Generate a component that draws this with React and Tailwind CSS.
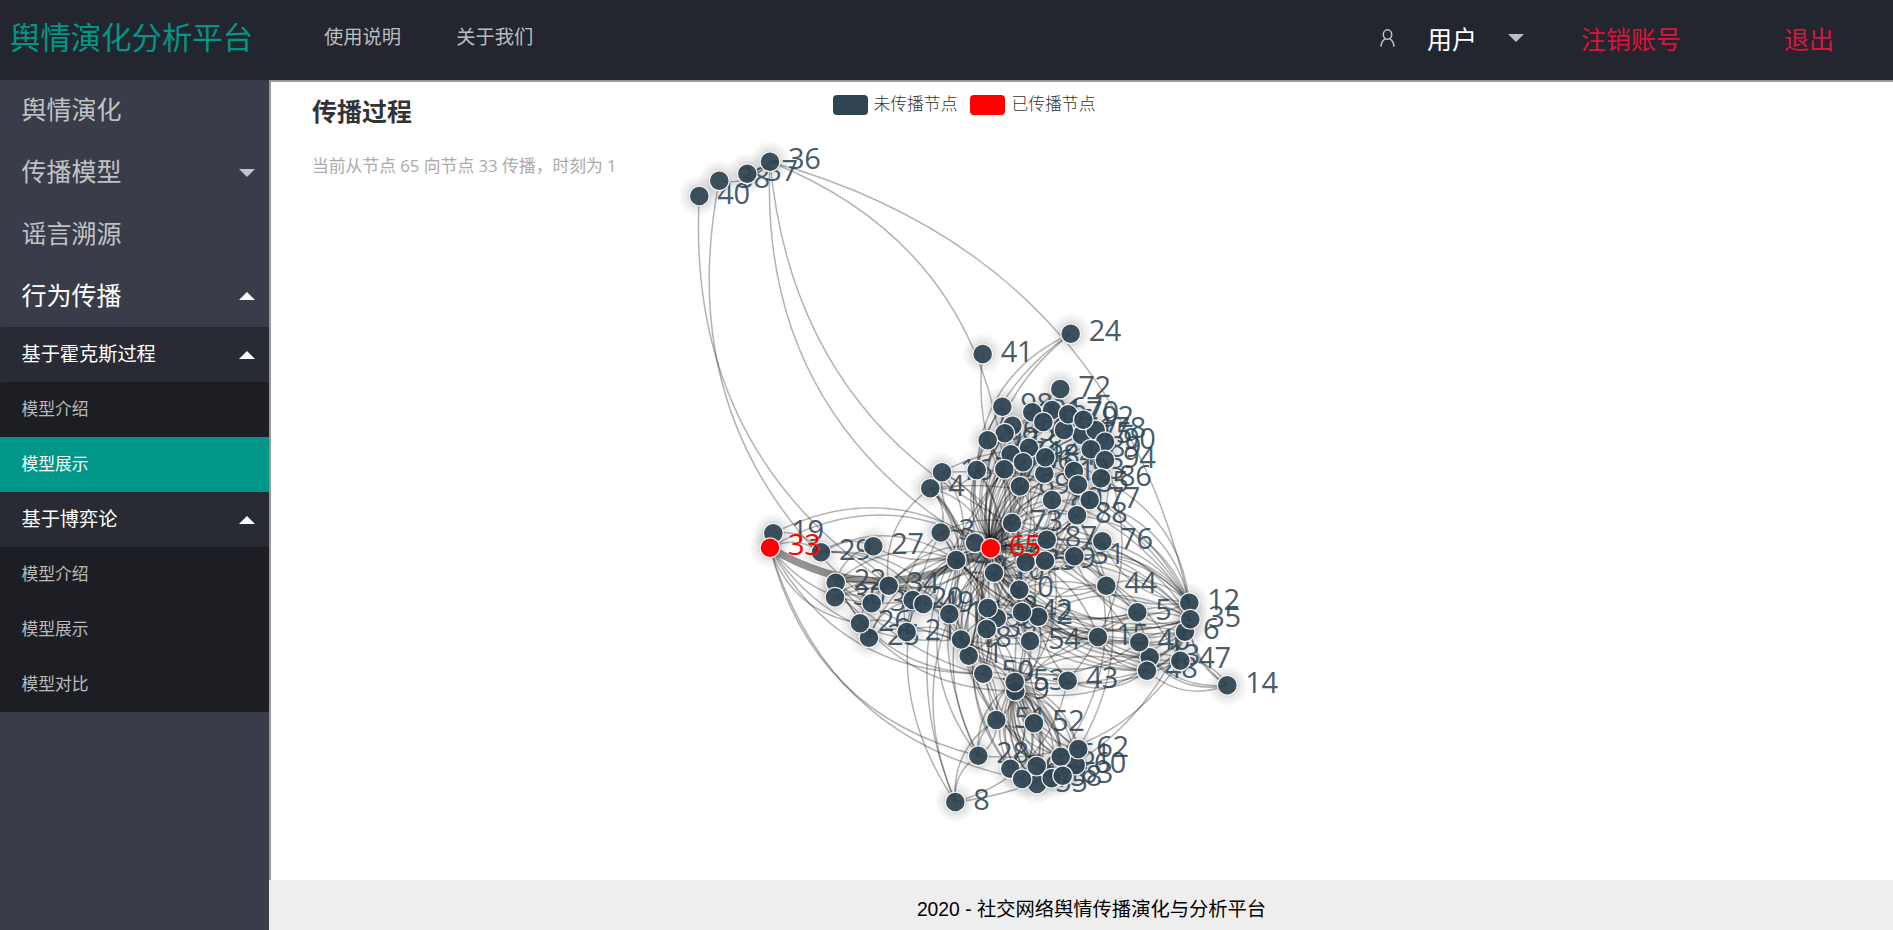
import React from "react";

const FONT = "font-['Open_Sans','Noto_Sans_CJK_SC',sans-serif]";

// [id, x, y], listed in painting order
const NODES = [
  ["36", 770, 161.7], ["37", 747.3, 173.7], ["38", 719.3, 180.7], ["40", 699.3, 196],
  ["41", 982.7, 354], ["24", 1070.7, 333.7],
  ["52", 1034, 723.3],
  ["72", 1060.3, 389], ["98", 1002.3, 406.7], ["91", 1032.3, 412.3], ["67", 1052, 410],
  ["97", 1012.3, 425.7], ["75", 1081.7, 435], ["78", 1095.7, 430], ["90", 1105, 441.7],
  ["96", 1043.3, 422], ["71", 1064, 430], ["70", 1068.3, 414.3], ["92", 1083.3, 419.7],
  ["95", 1004.7, 433.3], ["99a", 987.7, 440.3], ["89", 1090.7, 449.3], ["94", 1105, 460],
  ["82", 1029, 447.7], ["74", 1010.7, 454.3], ["79", 1004.3, 469.3], ["66", 1023, 462.3],
  ["81", 1044.3, 473.7], ["84", 1045.3, 457.3], ["7", 976.7, 470], ["93", 1074, 471],
  ["86", 1101, 478.3], ["85", 1078, 484.7], ["69", 1020, 486.3], ["77", 1089.7, 500],
  ["80", 1052, 500], ["88", 1077, 515.3], ["73", 1012, 523],
  ["16", 942, 472.3], ["4", 930.3, 488.3],
  ["76", 1102.3, 541.3], ["87", 1046.7, 539.7], ["3", 940.7, 532.5], ["11", 975, 542.7],
  ["19", 773.3, 533.3], ["29", 821, 552.3], ["33", 770, 547.7], ["27", 873.3, 546.3],
  ["45", 956.3, 560], ["10", 994, 572.7], ["65", 990.7, 548.3],
  ["23", 1025.7, 562.3], ["59", 1045, 560.7], ["31", 1074.3, 556.3],
  ["22", 835.7, 582.7], ["30", 835, 597.3], ["34", 888.7, 585.7], ["20", 912.7, 600],
  ["32", 871.7, 603.3], ["49", 923.3, 604], ["17", 949.3, 614], ["25", 869, 637.7],
  ["26", 860, 623.3], ["21", 906.7, 632], ["1", 968.7, 655.7], ["18", 961, 639.5],
  ["0", 1019.3, 589.7], ["44", 1106.3, 585.7], ["5", 1137.3, 612.3],
  ["2", 1038.3, 616.7], ["42", 1022, 612], ["99", 996.7, 618], ["32b", 987.7, 608],
  ["39", 986.7, 629], ["54", 1030, 641], ["15", 1098, 637],
  ["50", 983.3, 673.7], ["9", 1015.3, 691], ["53", 1014.7, 682], ["43", 1067.7, 680.7],
  ["13", 1149.7, 657.3], ["46", 1139.3, 642.3], ["48", 1147, 670.7],
  ["6", 1185, 631.7], ["12", 1189.3, 602.7], ["35", 1190.3, 619.3], ["47", 1180.3, 660.7],
  ["14", 1227.3, 685.3],
  ["51", 996.3, 720], ["28", 978.3, 755.7], ["8", 955.3, 802],
  ["55", 1037, 784], ["56", 1010.3, 768.7], ["57", 1022, 779], ["64", 1036.7, 766],
  ["60", 1075.7, 765], ["58", 1051.7, 778.3], ["61", 1060.7, 756.7], ["63", 1062.7, 775.7],
  ["62", 1078.3, 749],
];

// source node -> target nodes
const LINKS = {
  "20": "40 33 65 1",
  "32": "38 45",
  "11": "36 24 16 27",
  "87": "36 65 12 35 9 59",
  "36": "79 12 37 38",
  "65":
    "24 72 98 91 67 97 96 71 70 75 78 90 92 95 99a 89 94 82 74 79 66 84 7 81 93 86 85 69 77 80 88 73 76 87 44 12 35 5 48 53 9 34 0 10 59 31 23 15 47",
  "98": "65 99a 7",
  "99a": "65 10",
  "97": "65 39",
  "74": "65 69 84",
  "66": "65 81 10",
  "84": "65 11 23",
  "69": "65 80 23",
  "73": "65 88 31",
  "80": "65 87 10 42",
  "88": "65 12 62 61",
  "77": "65 12 45",
  "86": "65 35",
  "94": "77 31 43",
  "93": "10 0 84",
  "85": "65 23",
  "7": "65 24 12 39 4",
  "16": "65 12 45 86 42",
  "4": "65 3 45 18 12 17 1",
  "3": "65 45 17 87 23",
  "8": "65 3 79 28 51",
  "28": "65 33 45 53 51 79",
  "50": "33 53 22",
  "57": "33 53 9",
  "55": "53 9",
  "58": "53 9 65",
  "56": "53 10 32b",
  "64": "53 65 9",
  "53": "56 57 55 64 58 63 61 62 60 52 51 43 48",
  "9": "61 62 63 57 56 64 6 22",
  "63": "53 45",
  "61": "42 52 53 18",
  "62": "9 65 54",
  "47": "28 65 15 6 14 18",
  "35": "8 10 65 45 48 46 13 5 42",
  "6": "18 65 46 48 13 9 10",
  "12": "10 76 87",
  "14": "48 46 35 13 12",
  "48": "65 10 45 22 15 43",
  "46": "65 3 1 0",
  "13": "0 65 59 47",
  "5": "10 22 45 35 31",
  "44": "10 12 65 48",
  "15": "10 35 18 42",
  "33": "65 29",
  "19": "65 29",
  "29": "27 45 17 34 49",
  "22": "45 34 18 27",
  "30": "34 32 17 25",
  "34": "65 20 49 45 4 17",
  "49": "65 17 39 45 10",
  "17": "32b 10 65 18",
  "26": "33 34 21",
  "25": "21 65 20",
  "21": "65 45 18 3 1",
  "18": "10 1 42 33 51",
  "1": "65 10 0 39 54 9",
  "39": "10 65 53 50",
  "32b": "65 42 54 39",
  "42": "65 0 10 2",
  "2": "65 35 44 9",
  "54": "10 53 42 15",
  "0": "65 5 31 87",
  "10": "45 59 35 39",
  "45": "23 10 39 50",
  "23": "31 65 35",
  "31": "41 76 44 12 10",
  "59": "12 10 31",
  "43": "87 10 8",
  "52": "65 51 61",
  "51": "65 0 28 53",
};

const POS = Object.fromEntries(NODES.map(([id, x, y]) => [id, [x, y]]));
const SPREAD = new Set(["33", "65"]);

function curve(a, b) {
  const [x1, y1] = POS[a];
  const [x2, y2] = POS[b];
  const cx = (x1 + x2) / 2 - (y1 - y2) * 0.3;
  const cy = (y1 + y2) / 2 - (x2 - x1) * 0.3;
  return `M${x1} ${y1}Q${cx.toFixed(1)} ${cy.toFixed(1)} ${x2} ${y2}`;
}

const EDGES = Object.entries(LINKS).flatMap(([s, t]) => t.split(" ").map((k) => [s, k]));

// Idle labels sit under the nodes, labels of reached nodes above them
function Labels({ spread }) {
  return (
    <g className={FONT} fontSize="29" letterSpacing="-0.4" fill={spread ? "#f00" : "#2f4554"} fillOpacity={spread ? 1 : 0.9}>
      {NODES.filter(([id]) => SPREAD.has(id) === spread).map(([id, x, y]) => (
        <text key={id} x={x + 18} y={y + 7.5}>
          {id.replace(/[a-z]/, "")}
        </text>
      ))}
    </g>
  );
}

function Graph() {
  return (
    <svg className="col-start-1 row-start-1 block h-[798px] w-[1622px]" viewBox="271 82 1622 798">
      <defs>
        <radialGradient id="glow">
          <stop offset="0.4" stopColor="#000" stopOpacity="0.2" />
          <stop offset="0.62" stopColor="#000" stopOpacity="0.08" />
          <stop offset="1" stopColor="#000" stopOpacity="0" />
        </radialGradient>
      </defs>
      {NODES.map(([id, x, y]) => (
        <circle key={id} cx={x} cy={y} r="21" fill="url(#glow)" />
      ))}
      <g fill="none" stroke="#000" strokeOpacity="0.3" strokeWidth="1.5">
        {EDGES.map(([a, b]) => (
          <path key={a + "-" + b} d={curve(a, b)} />
        ))}
      </g>
      <path d={curve("65", "33")} fill="none" stroke="#000" strokeOpacity="0.42" strokeWidth="7.5" />
      <Labels spread={false} />
      {NODES.map(([id, x, y]) => (
        <circle
          key={id}
          cx={x}
          cy={y}
          r="9.9"
          fill={SPREAD.has(id) ? "#f00" : "#2f4554"}
          fillOpacity={SPREAD.has(id) ? 1 : 0.93}
          stroke="#fff"
          strokeOpacity="0.9"
          strokeWidth="1.3"
        />
      ))}
      <Labels spread />
    </svg>
  );
}

function Caret({ up, className = "" }) {
  return (
    <svg className={`block h-2 w-4 ${className}`} viewBox="0 0 16 8" fill="currentColor">
      <path d={up ? "M0 8L8 0L16 8Z" : "M0 0H16L8 8Z"} />
    </svg>
  );
}

function TopItem({ label, open, caret }) {
  return (
    <div className={`flex h-[61.75px] items-center justify-between pr-3.5 pb-0.5 pl-[21.5px] text-[25px] ${open ? "text-white" : "text-white/70"}`}>
      <span className="leading-none">{label}</span>
      {caret && <Caret up={open} className="mt-0.5" />}
    </div>
  );
}

function Group({ label, children }) {
  return (
    <div className="rounded-xs bg-[#282b33]">
      <div className="flex h-[55px] items-center justify-between pr-3.5 pb-0.5 pl-[21.5px] text-[19.2px] text-white">
        <span className="leading-none">{label}</span>
        <Caret up className="mt-0.5" />
      </div>
      <div className="rounded-xs bg-[#1c1e24]">{children}</div>
    </div>
  );
}

function Leaf({ label, active }) {
  return (
    <div className={`flex h-[55px] items-center pl-[21.5px] text-[16.8px] ${active ? "bg-[#009688] text-white" : "text-white/70"}`}>
      <span className="leading-none">{label}</span>
    </div>
  );
}

export default function App() {
  return (
    <div className={`flex h-[930px] w-[1893px] flex-col overflow-hidden bg-white whitespace-nowrap ${FONT}`}>
      <header className="flex h-20 shrink-0 bg-[#23262e]">
        <div className="flex h-[76px] w-[324px] items-center pl-[10px] text-[30.4px] leading-none text-[#009688]">舆情演化分析平台</div>
        <nav className="flex h-[74px] items-center gap-[55px] text-[19.3px] leading-none text-white/70">
          <span>使用说明</span>
          <span>关于我们</span>
        </nav>
        <div className="ml-auto flex h-[78px] items-center pr-[59px] text-[25px] leading-none">
          <svg className="mr-[32px] -mt-0.5 block h-[18px] w-[15px]" viewBox="0 0 15 18" fill="none" stroke="#c0c1c3" strokeWidth="1.5">
            <ellipse cx="7.5" cy="5.5" rx="4.2" ry="4.7" />
            <path d="M1 17.6C1.2 13.8 3 11 5.4 9.6M14 17.6C13.8 13.8 12 11 9.6 9.6" />
          </svg>
          <span className="w-[81px] text-white">用户</span>
          <Caret className="mr-[57px] -mt-0.5 text-white/70" />
          <span className="w-[203px] text-[#dc143c]">注销账号</span>
          <span className="text-[#dc143c]">退出</span>
        </div>
      </header>
      <div className="flex min-h-0 flex-1">
        <aside className="w-[269px] shrink-0 bg-[#393d49]">
          <TopItem label="舆情演化" />
          <TopItem label="传播模型" caret />
          <TopItem label="谣言溯源" />
          <TopItem label="行为传播" caret open />
          <Group label="基于霍克斯过程">
            <Leaf label="模型介绍" />
            <Leaf label="模型展示" active />
          </Group>
          <Group label="基于博弈论">
            <Leaf label="模型介绍" />
            <Leaf label="模型展示" />
            <Leaf label="模型对比" />
          </Group>
        </aside>
        <div className="flex flex-1 flex-col">
          <main className="grid h-[800px] grid-cols-[1622px] grid-rows-[798px] border-t-2 border-l-2 border-[#999]">
            <Graph />
            <div className="col-start-1 row-start-1 flex items-start">
              <div className="w-[561.5px] pt-4 pl-[41px]">
                <h1 className="text-[25px] leading-[26px] font-bold text-[#333]">传播过程</h1>
                <p className="mt-8 text-[16.8px] leading-5 text-[#aaa]">当前从节点 65 向节点 33 传播，时刻为 1</p>
              </div>
              <ul className="flex items-center pt-[11px] text-[16.8px] leading-[22px] text-[#333]">
                <li className="flex items-center">
                  <span className="mr-[6px] h-5 w-[35px] rounded bg-[#2f4554]" />
                  <span className="w-[96px] pb-0.5 font-light">未传播节点</span>
                </li>
                <li className="flex items-center">
                  <span className="mr-[7px] h-5 w-[35px] rounded bg-[#f00]" />
                  <span className="pb-0.5 font-light">已传播节点</span>
                </li>
              </ul>
            </div>
          </main>
          <footer className="flex h-[50px] items-center justify-center bg-[#eee] pt-2.5 pl-[21px] text-[19.3px] leading-none text-black">
            <span className="font-['Liberation_Sans','Noto_Sans_CJK_SC',sans-serif]">2020 - 社交网络舆情传播演化与分析平台</span>
          </footer>
        </div>
      </div>
    </div>
  );
}
